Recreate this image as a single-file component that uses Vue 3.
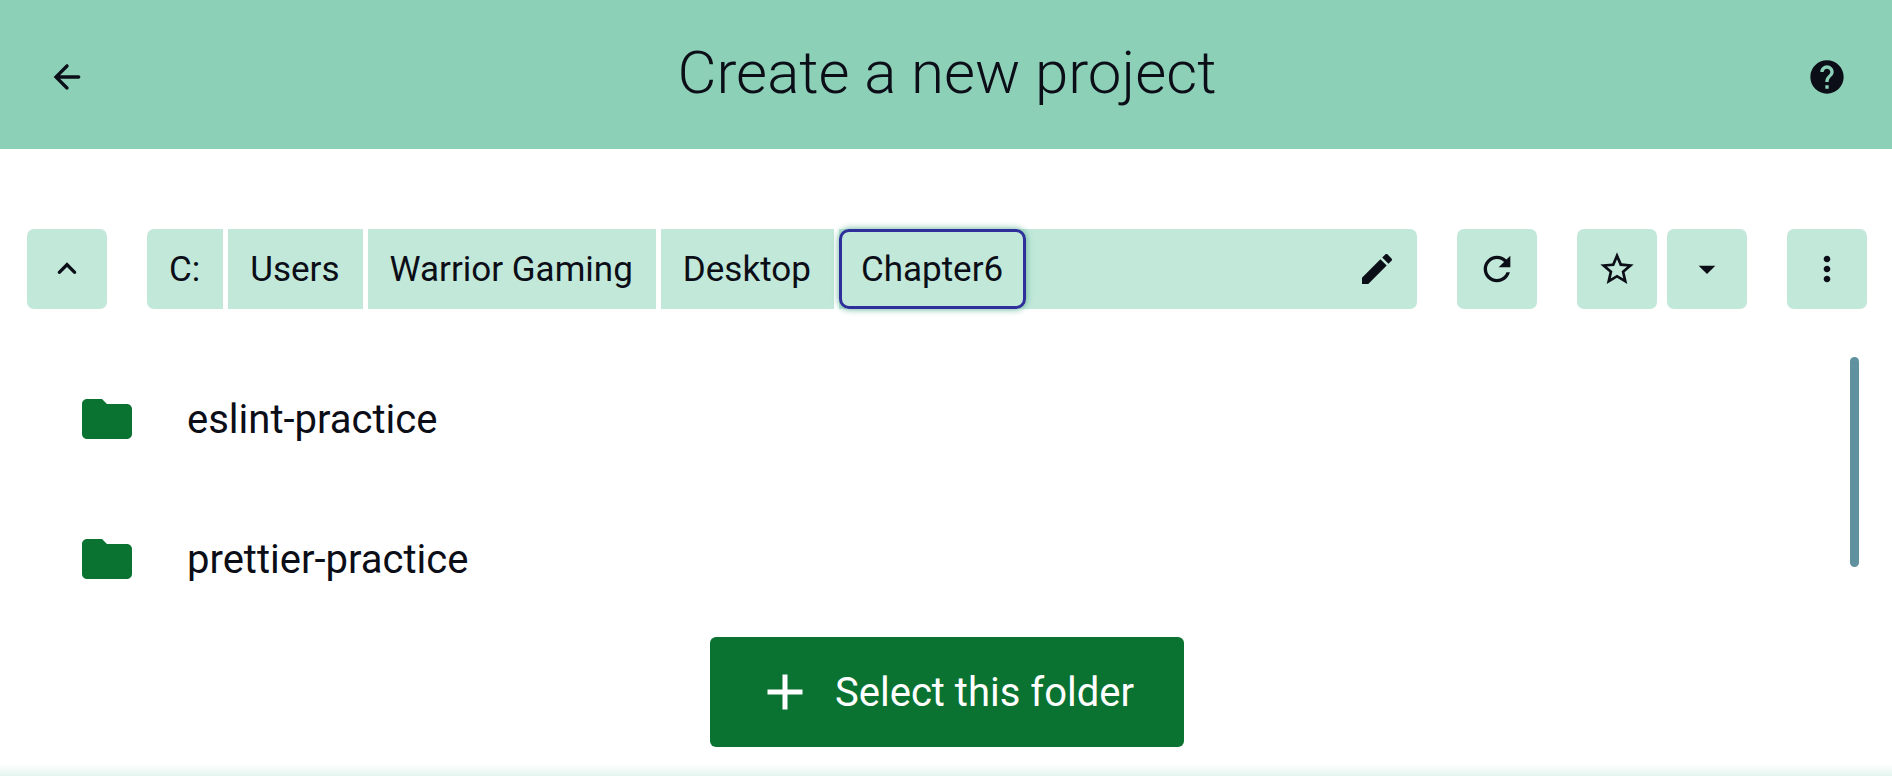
<script setup>
import { ref } from 'vue'

const crumbs = ['C:', 'Users', 'Warrior Gaming', 'Desktop', 'Chapter6']
const current = ref('Chapter6')
const folders = ['eslint-practice', 'prettier-practice']
</script>

<template>
  <div class="page">
    <header class="header">
      <button class="icon-button plain" type="button" aria-label="Back">
        <svg class="icon" viewBox="0 0 24 24"><path d="M19 11H7.83l4.88-4.88c.39-.39.39-1.03 0-1.42-.39-.39-1.02-.39-1.41 0L4 12l7.29 7.29c.39.39 1.02.39 1.41 0 .39-.39.39-1.02 0-1.41L7.83 13H19c.55 0 1-.45 1-1s-.45-1-1-1z" /></svg>
      </button>
      <h1 class="title">Create a new project</h1>
      <button class="icon-button plain" type="button" aria-label="Help">
        <svg class="icon" viewBox="0 0 24 24"><path d="M12 2C6.48 2 2 6.48 2 12s4.48 10 10 10 10-4.48 10-10S17.52 2 12 2zm1 17h-2v-2h2v2zm2.07-7.75-.9.92C13.45 12.9 13 13.5 13 15h-2v-.5c0-1.1.45-2.1 1.17-2.83l1.24-1.26c.37-.36.59-.86.59-1.41 0-1.1-.9-2-2-2s-2 .9-2 2H8c0-2.21 1.79-4 4-4s4 1.79 4 4c0 .88-.36 1.68-.93 2.25z" /></svg>
      </button>
    </header>

    <main class="content">
      <div class="toolbar">
        <button class="icon-button" type="button" aria-label="Parent folder">
          <svg class="icon" viewBox="0 0 24 24"><path d="M8.12 14.71 12 10.83l3.88 3.88c.39.39 1.02.39 1.41 0 .39-.39.39-1.02 0-1.41L12 8l-5.29 5.3c-.39.39-.39 1.02 0 1.41.39.38 1.03.39 1.41 0z" /></svg>
        </button>
        <nav class="path" aria-label="Current folder">
          <button
            v-for="crumb in crumbs"
            :key="crumb"
            type="button"
            class="crumb"
            :class="{ current: crumb === current }"
            @click="current = crumb"
          >{{ crumb }}</button>
          <button class="edit" type="button" aria-label="Edit path">
            <svg class="icon" viewBox="0 0 24 24"><path d="M3 17.25V21h3.75L17.81 9.94l-3.75-3.75L3 17.25zM20.71 7.04c.39-.39.39-1.02 0-1.41l-2.34-2.34c-.39-.39-1.02-.39-1.41 0l-1.83 1.83 3.75 3.75 1.83-1.83z" /></svg>
          </button>
        </nav>
        <button class="icon-button" type="button" aria-label="Refresh">
          <svg class="icon" viewBox="0 0 24 24"><path d="M17.65 6.35C16.2 4.9 14.21 4 12 4c-4.42 0-7.99 3.58-7.99 8s3.57 8 7.99 8c3.73 0 6.84-2.55 7.73-6h-2.08c-.82 2.33-3.04 4-5.65 4-3.31 0-6-2.69-6-6s2.69-6 6-6c1.66 0 3.14.69 4.22 1.78L13 11h7V4l-2.35 2.35z" /></svg>
        </button>
        <div class="favorites">
          <button class="icon-button" type="button" aria-label="Add to favorites">
            <svg class="icon" viewBox="0 0 24 24"><path d="m22 9.24-7.19-.62L12 2 9.19 8.63 2 9.24l5.46 4.73L5.82 21 12 17.27 18.18 21l-1.63-7.03L22 9.24zM12 15.4l-3.76 2.27 1-4.28-3.32-2.88 4.38-.38L12 6.1l1.71 4.04 4.38.38-3.32 2.88 1 4.28L12 15.4z" /></svg>
          </button>
          <button class="icon-button" type="button" aria-label="Show favorites">
            <svg class="icon" viewBox="0 0 24 24"><path d="m7 10 5 5 5-5z" /></svg>
          </button>
        </div>
        <button class="icon-button" type="button" aria-label="More actions">
          <svg class="icon" viewBox="0 0 24 24"><path d="M12 8c1.1 0 2-.9 2-2s-.9-2-2-2-2 .9-2 2 .9 2 2 2zm0 2c-1.1 0-2 .9-2 2s.9 2 2 2 2-.9 2-2-.9-2-2-2zm0 6c-1.1 0-2 .9-2 2s.9 2 2 2 2-.9 2-2-.9-2-2-2z" /></svg>
        </button>
      </div>

      <div class="browser">
        <ul class="folders">
          <li v-for="folder in folders" :key="folder">
            <button class="folder" type="button">
              <svg class="icon large" viewBox="0 0 24 24"><path d="M10 4H4c-1.1 0-2 .9-2 2v12c0 1.1.9 2 2 2h16c1.1 0 2-.9 2-2V8c0-1.1-.9-2-2-2h-8l-2-2z" /></svg>
              <span>{{ folder }}</span>
            </button>
          </li>
        </ul>
        <div class="scroll-thumb"></div>
      </div>

      <div class="actions">
        <button class="select" type="button">
          <svg class="icon large" viewBox="0 0 24 24"><path d="M19 13h-6v6h-2v-6H5v-2h6V5h2v6h6v2z" /></svg>
          <span>Select this folder</span>
        </button>
      </div>
    </main>
    <div class="bottom-shade"></div>
  </div>
</template>

<style>
html,
body {
  background: #fff;
}
</style>

<style scoped>
.page {
  min-height: 100vh;
  display: flex;
  flex-direction: column;
  background: #fff;
  color: #0b0d17;
  font-family: Roboto, "Liberation Sans", sans-serif;
  font-size: 35px;
}

button {
  margin: 0;
  padding: 0;
  border: 0;
  background: none;
  color: inherit;
  font: inherit;
  cursor: pointer;
}

.icon {
  display: block;
  flex: none;
  width: 40px;
  height: 40px;
  fill: currentColor;
}

.icon.large {
  width: 60px;
  height: 60px;
}

.header {
  display: flex;
  align-items: flex-start;
  padding: 37px 25px 32px 27px;
  background: #8dd0b8;
}

.title {
  flex: 1;
  margin: 0;
  font-size: 60px;
  line-height: 72px;
  font-weight: 300;
  text-align: center;
}

.icon-button {
  display: flex;
  flex: none;
  align-items: center;
  justify-content: center;
  width: 80px;
  height: 80px;
  border-radius: 7px;
  background: #c1e8d9;
}

.icon-button.plain {
  background: none;
}

.content {
  flex: 1;
  display: flex;
  flex-direction: column;
  padding-top: 80px;
}

.toolbar {
  display: flex;
  gap: 40px;
  padding: 0 25px 0 27px;
}

.path {
  flex: 1;
  display: flex;
  min-width: 0;
  height: 80px;
  border-radius: 7px;
  background: #c1e8d9;
}

.crumb {
  flex: none;
  padding: 0 23px 0 22px;
  border-right: 5px solid #fff;
}

.crumb.current {
  padding: 0 20px 0 19px;
  border: 3px solid #2f2f9b;
  border-radius: 10px;
  box-shadow: 0 0 7px #57ab91;
}

.edit {
  display: flex;
  align-items: center;
  margin-left: auto;
  padding: 0 20px;
}

.favorites {
  display: flex;
  gap: 10px;
}

.browser {
  display: flex;
  justify-content: space-between;
  padding: 40px 33px 0 77px;
}

.folders {
  flex: 1;
  margin: 0;
  padding: 0;
  list-style: none;
}

.folder {
  display: flex;
  align-items: center;
  gap: 50px;
  width: 100%;
  height: 140px;
  font-size: 40px;
}

.folder .icon {
  color: #0b7332;
}

.scroll-thumb {
  width: 9px;
  height: 210px;
  margin-top: 8px;
  border-radius: 5px;
  background: #5f929e;
}

.actions {
  display: flex;
  justify-content: center;
  padding: 8px 25px 0 27px;
}

.select {
  display: flex;
  align-items: center;
  gap: 20px;
  height: 110px;
  padding: 0 50px 0 45px;
  border-radius: 6px;
  background: #0b7332;
  color: #fff;
  font-size: 40px;
}

.bottom-shade {
  height: 12px;
  background: linear-gradient(#fff, #e3f4ed);
}
</style>
